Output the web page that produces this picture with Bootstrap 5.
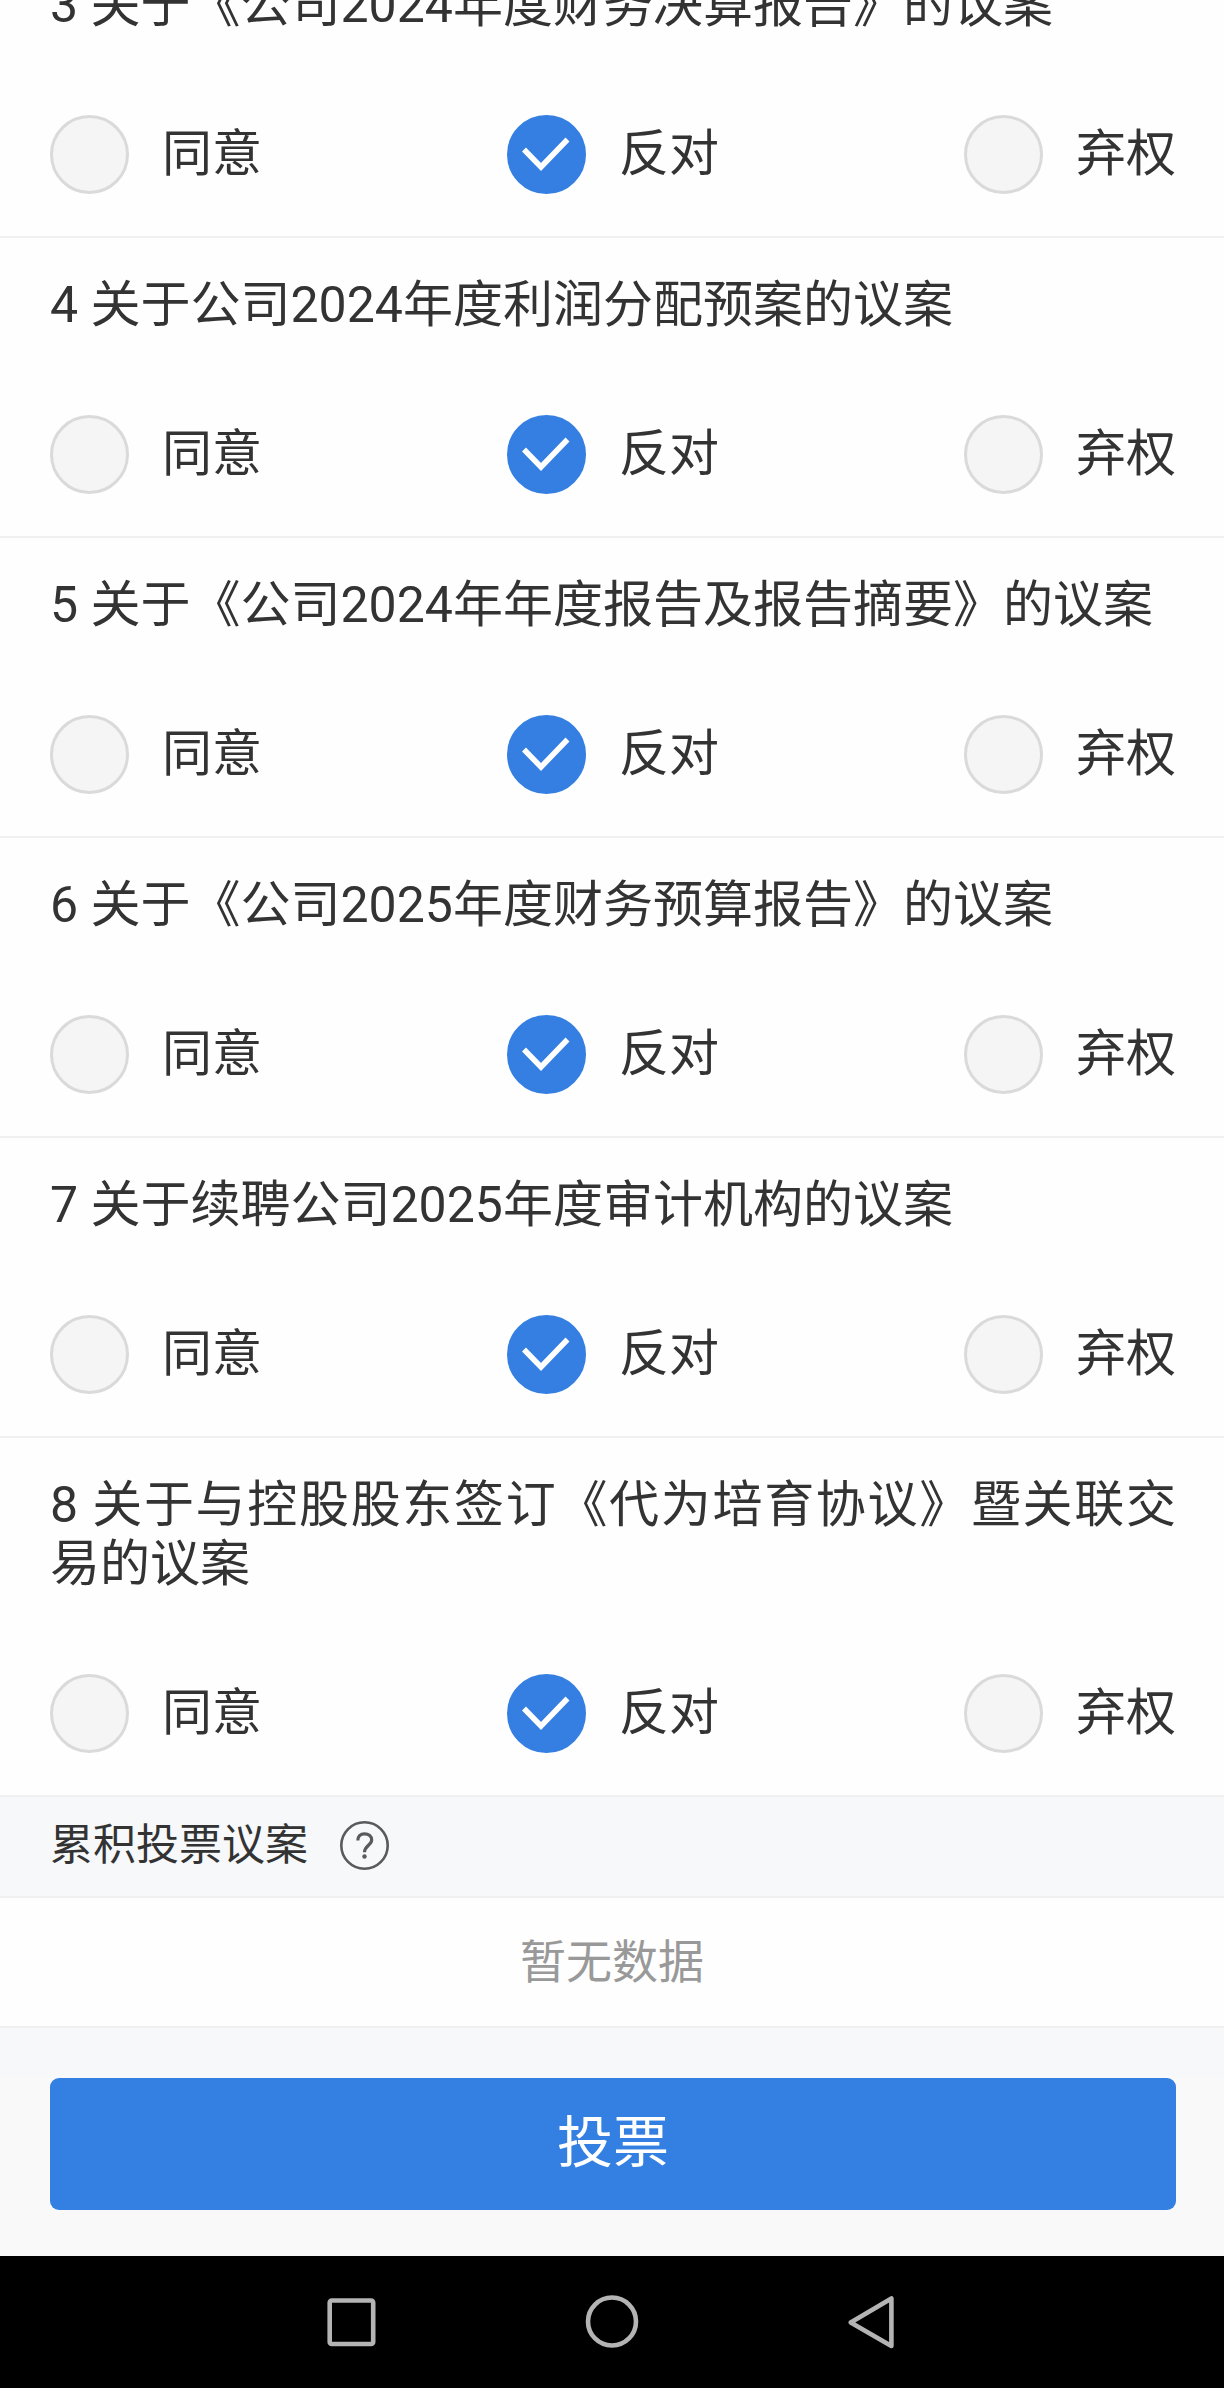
<!DOCTYPE html>
<html lang="zh-CN">
<head>
<meta charset="utf-8">
<meta name="viewport" content="width=device-width, initial-scale=1">
<title>股东大会投票</title>
<link href="https://cdn.jsdelivr.net/npm/bootstrap@5.3.0/dist/css/bootstrap.min.css" rel="stylesheet">
<style>
  body {
    font-family: Roboto, "Noto Sans CJK SC", sans-serif;
    color: #333;
    background: #f6f8fa;
    overflow-x: hidden;
  }
  /* the list is scrolled up under the top edge of the screen */
  .vote-list { margin-top: -62px; }
  .vote-item {
    padding: 38px 48px 42px 50px;
    border-bottom: 2px solid #f0f0f0;
    background: #fefefe;
  }
  .vote-title {
    font-size: 50px;
    line-height: 59px;
    font-weight: 400;
    text-align: justify;
    margin: 0 0 80px;
  }
  .choice { gap: 33px; font-size: 50px; line-height: 59px; }
  .choice .form-check-input {
    width: 79px;
    height: 79px;
    margin: 0;
    border: 3px solid #dadada;
    background-color: #f5f5f5;
    flex: none;
  }
  .choice .form-check-input:checked {
    border-color: #347fe1;
    background-color: #347fe1;
    background-origin: border-box;
    background-size: 100% 100%;
    background-image: url("data:image/svg+xml,%3Csvg xmlns='http://www.w3.org/2000/svg' viewBox='0 0 79 79'%3E%3Cpath d='M17 34.5L34 52L60.500 24.500' fill='none' stroke='%23fff' stroke-width='5.500'/%3E%3C/svg%3E");
  }
  .section-bar {
    padding: 19px 50px 21px;
    gap: 32px;
    border-bottom: 2px solid #f0f0f0;
  }
  .section-bar h2 { font-size: 43px; line-height: 59px; font-weight: 400; }
  .help-btn { width: 49px; height: 49px; }
  .empty-note {
    font-size: 46px;
    line-height: 59px;
    padding: 35px 50px 34px;
    color: #999;
    background: #fefefe;
    border-bottom: 2px solid #f0f0f0;
  }
  .submit-bar { margin-top: 50px; padding: 0 48px 46px 50px; background: #f9f9f9; }
  .btn-vote {
    --bs-btn-color: #fff;
    --bs-btn-bg: #3380e2;
    --bs-btn-hover-color: #fff;
    --bs-btn-hover-bg: #2a72cf;
    --bs-btn-border-width: 0;
    --bs-btn-border-radius: 9px;
    font-size: 56px;
    line-height: 59px;
    padding: 36px 0 37px;
  }
  .system-nav { background: #000; height: 132px; }
  .system-nav .btn { width: 260px; padding: 0; border: 0; line-height: 1; }
</style>
</head>
<body>
<main>
  <form>
    <div class="vote-list" id="voteList"></div>

    <div class="section-bar d-flex align-items-center">
      <h2 class="m-0">累积投票议案</h2>
      <button type="button" class="help-btn btn p-0 border-0 d-flex" aria-label="帮助">
        <svg width="49" height="49" viewBox="0 0 49 49" fill="none" stroke="#5a5a5a" aria-hidden="true">
          <circle cx="24.500" cy="24.500" r="23.200" stroke-width="2.600"/>
          <path d="M17.800 19.500C17.800 15.300 20.300 12.800 24.500 12.800s7.200 2.500 7.200 6.200c0 5-7.200 5.800-7.200 12.300" stroke-width="3.200"/>
          <circle cx="24.500" cy="35.500" r="2.200" fill="#5a5a5a" stroke="none"/>
        </svg>
      </button>
    </div>
    <div class="empty-note text-center">暂无数据</div>

    <div class="submit-bar">
      <button type="submit" class="btn btn-vote w-100 d-block">投票</button>
    </div>
  </form>
</main>

<nav class="system-nav d-flex justify-content-center align-items-center" aria-label="系统导航">
  <button type="button" class="btn" aria-label="最近任务">
    <svg width="54" height="54" viewBox="0 0 54 54" fill="none" stroke="#b4b4b4" stroke-width="4.600" aria-hidden="true"><rect x="4.700" y="5.500" width="43.500" height="43.500" rx="2"/></svg>
  </button>
  <button type="button" class="btn" aria-label="主屏幕">
    <svg width="54" height="54" viewBox="0 0 54 54" fill="none" stroke="#b4b4b4" stroke-width="4.600" aria-hidden="true"><circle cx="27" cy="26.500" r="24"/></svg>
  </button>
  <button type="button" class="btn" aria-label="返回">
    <svg width="54" height="54" viewBox="0 0 54 54" fill="none" stroke="#b4b4b4" stroke-width="4.600" stroke-linejoin="round" aria-hidden="true"><path d="M46.400 3.500V51L5.700 27.500z"/></svg>
  </button>
</nav>

<script src="https://cdn.jsdelivr.net/npm/bootstrap@5.3.0/dist/js/bootstrap.bundle.min.js"></script>
<script>
  const proposals = [
    [3, "关于《公司2024年度财务决算报告》的议案"],
    [4, "关于公司2024年度利润分配预案的议案"],
    [5, "关于《公司2024年年度报告及报告摘要》的议案"],
    [6, "关于《公司2025年度财务预算报告》的议案"],
    [7, "关于续聘公司2025年度审计机构的议案"],
    [8, "关于与控股股东签订《代为培育协议》暨关联交易的议案"]
  ];
  const options = ["同意", "反对", "弃权"];
  document.getElementById("voteList").innerHTML = proposals.map(([no, title]) => `
    <section class="vote-item" role="radiogroup" aria-labelledby="title${no}">
      <h3 class="vote-title" id="title${no}">${no} ${title}</h3>
      <div class="d-flex justify-content-between">
        ${options.map((text, i) => `
        <div class="choice d-flex align-items-center">
          <input class="form-check-input" type="radio" name="vote${no}" id="vote${no}-${i}" ${i === 1 ? "checked" : ""}>
          <label for="vote${no}-${i}">${text}</label>
        </div>`).join("")}
      </div>
    </section>`).join("");
</script>
</body>
</html>
